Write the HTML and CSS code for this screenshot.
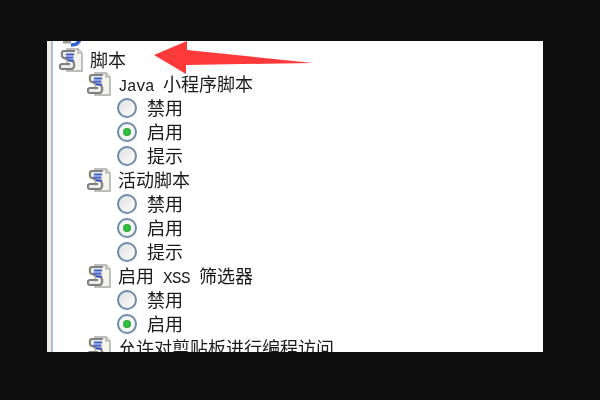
FILE: index.html
```html
<!DOCTYPE html>
<html lang="zh-CN">
<head>
  <meta charset="utf-8">
  <title>安全设置</title>
  <link rel="stylesheet" href="styles.css">
</head>
<body>
  <svg class="defs" width="0" height="0">
    <symbol id="scriptIcon" viewBox="0 0 24 24">
      <path d="M8 1h11l4 4v18H8z" fill="#f4f3ee" stroke="#a9a9a5" stroke-width="1.400"/>
      <path d="M19 1v4h4" fill="#dcdcd8" stroke="#a9a9a5" stroke-width="1.200"/>
      <path d="M16 3H5C2 3 2 9 5 10l8 3c3 1 3 7 0 8H3c-3 0-3-5 0-5h8" fill="#eaeae8" stroke="#7e7e7c" stroke-width="2"/>
      <path d="M7 6.500h8M6.500 9.500h8M9 12.500h6" stroke="#3f5cc8" stroke-width="2"/>
    </symbol>
    <symbol id="javaIcon" viewBox="0 0 24 24">
      <path d="M4 18h8" stroke="#9a9a98" stroke-width="3"/>
      <path d="M12 21c5 0 9-2 9-8" fill="none" stroke="#2f62d0" stroke-width="3.500"/>
    </symbol>
  </svg>

  <div class="panel">
    <div class="strip"></div>
    <ul class="tree">
      <li class="row row-top">
        <svg class="icon"><use href="#javaIcon"/></svg>
        <span class="latin">Java VM</span>
      </li>
      <li>
        <div class="row">
          <svg class="icon"><use href="#scriptIcon"/></svg>
          <span>脚本</span>
        </div>
        <ul class="group">
          <li>
            <div class="row">
              <svg class="icon"><use href="#scriptIcon"/></svg>
              <span><span class="latin">Java </span>小程序脚本</span>
            </div>
            <ul class="options">
              <li class="row"><span class="radio"></span>禁用</li>
              <li class="row"><span class="radio on"></span>启用</li>
              <li class="row"><span class="radio"></span>提示</li>
            </ul>
          </li>
          <li>
            <div class="row">
              <svg class="icon"><use href="#scriptIcon"/></svg>
              <span>活动脚本</span>
            </div>
            <ul class="options">
              <li class="row"><span class="radio"></span>禁用</li>
              <li class="row"><span class="radio on"></span>启用</li>
              <li class="row"><span class="radio"></span>提示</li>
            </ul>
          </li>
          <li>
            <div class="row">
              <svg class="icon"><use href="#scriptIcon"/></svg>
              <span>启用<span class="latin"> XSS </span>筛选器</span>
            </div>
            <ul class="options">
              <li class="row"><span class="radio"></span>禁用</li>
              <li class="row"><span class="radio on"></span>启用</li>
            </ul>
          </li>
          <li>
            <div class="row">
              <svg class="icon"><use href="#scriptIcon"/></svg>
              <span>允许对剪贴板进行编程访问</span>
            </div>
          </li>
        </ul>
      </li>
    </ul>

    <svg class="arrow" width="170" height="40" viewBox="0 0 170 40">
      <polygon points="1,14 34,0 34,9 160,22 33,24 33,33" fill="#fd3a3a"/>
    </svg>
  </div>
</body>
</html>
```

FILE: styles.css
```css
html, body {
  margin: 0;
  padding: 0;
  width: 600px;
  height: 400px;
  overflow: hidden;
  background: #0e0e0e;
}

body {
  box-sizing: border-box;
  padding: 41px 57px 48px 47px;
  display: flex;
  font-family: "Noto Sans CJK SC", sans-serif;
  font-size: 18px;
  color: #1a1a1a;
}

.defs {
  position: absolute;
}

.panel {
  position: relative;
  flex: 1;
  display: flex;
  overflow: hidden;
  background: #fff;
}

.strip {
  width: 4px;
  margin-right: 2px;
  flex-shrink: 0;
  background: #f0ece0;
  box-shadow: 2px 0 0 #a9c0dc;
}

ul {
  list-style: none;
  margin: 0;
  padding: 0;
}

.tree {
  flex: 1;
  margin-top: -17px;
  padding-left: 6px;
  filter: blur(0.45px);
}

.group {
  padding-left: 28px;
}

.options {
  padding-left: 30px;
}

.row {
  display: flex;
  align-items: flex-start;
  height: 24px;
  line-height: 22px;
  white-space: pre;
}

.row-top {
  line-height: 27px;
}

.icon {
  align-self: center;
  width: 24px;
  height: 24px;
  margin-right: 7px;
  flex-shrink: 0;
}

.latin {
  font-family: "Liberation Mono", monospace;
  font-size: 16px;
  letter-spacing: -0.6px;
}

.radio {
  position: relative;
  align-self: center;
  box-sizing: border-box;
  width: 20px;
  height: 20px;
  margin-right: 10px;
  flex-shrink: 0;
  border: 2px solid #6b8dab;
  border-radius: 50%;
  background: linear-gradient(135deg, #dedede, #fff);
}

.radio.on {
  background: #f4f4f4;
}

.radio.on::after {
  content: "";
  position: absolute;
  top: 4px;
  left: 4px;
  width: 8px;
  height: 8px;
  border-radius: 50%;
  background: radial-gradient(circle at 45% 45%, #3cc94a, #14a02a);
}

.arrow {
  position: absolute;
  top: 0;
  left: 106px;
  filter: blur(0.4px);
}
```
